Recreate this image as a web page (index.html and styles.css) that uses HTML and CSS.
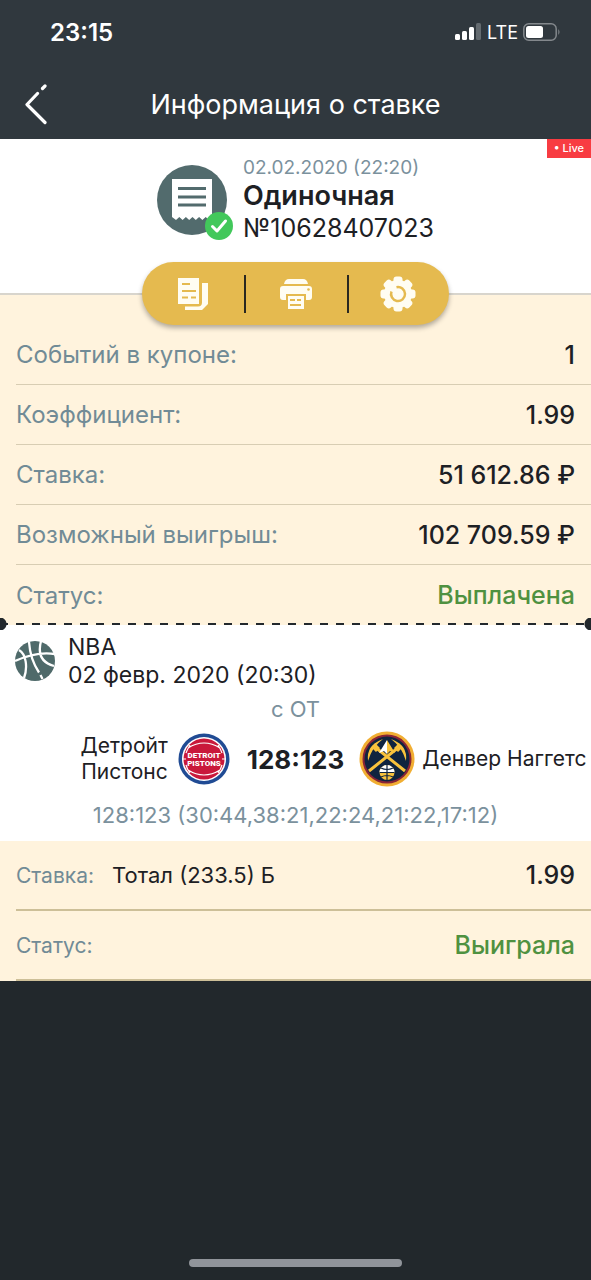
FILE: index.html
```html
<!DOCTYPE html>
<html lang="ru">
<head>
<meta charset="utf-8">
<meta name="viewport" content="width=device-width, initial-scale=1">
<title>Информация о ставке</title>
<link rel="stylesheet" href="styles.css">
</head>
<body>
<div class="screen">
  <header class="top">
    <div class="status">
      <span class="clock">23:15</span>
      <div class="status-icons">
        <svg width="27" height="18" viewBox="0 0 27 18" aria-hidden="true">
          <rect x="0" y="11" width="5" height="6" rx="1.5" fill="#fff"/>
          <rect x="7" y="8" width="5" height="9" rx="1.5" fill="#fff"/>
          <rect x="14" y="4" width="5" height="13" rx="1.5" fill="#fff"/>
          <rect x="21" y="0" width="5" height="17" rx="1.5" fill="#646b70"/>
        </svg>
        <span class="network">LTE</span>
        <svg width="38" height="18" viewBox="0 0 38 18" aria-hidden="true">
          <rect x=".8" y=".8" width="32.4" height="16.4" rx="5" fill="none" stroke="#83888c" stroke-width="1.5"/>
          <rect x="3" y="3" width="17" height="12" rx="2.5" fill="#fff"/>
          <path d="M35.3 6q2.400 3 0 6z" fill="#83888c"/>
        </svg>
      </div>
    </div>
    <nav class="nav">
      <button class="back" type="button" aria-label="Назад">
        <svg width="24" height="42" viewBox="0 0 24 42" fill="none" stroke="#fff" stroke-width="3.2" stroke-linecap="round" stroke-linejoin="round" aria-hidden="true">
          <path d="M13.500 9.500L3 20.500l18 18M18.500 4.500L21 2"/>
        </svg>
      </button>
      <h1 class="title">Информация о ставке</h1>
    </nav>
  </header>

  <section class="ticket">
    <span class="live">• Live</span>
    <svg class="ticket-icon" width="78" height="78" viewBox="0 0 78 78" aria-hidden="true">
      <circle cx="35" cy="36" r="35" fill="#526b6d"/>
      <path d="M15 15h40v38l-3 3-3.300-3-3.300 3-3.300-3-3.300 3-3.300-3-3.300 3-3.300-3-3.300 3-3.300-3-3.300 3L15 53z" fill="#fff"/>
      <path d="M21 24.500h28M21 33h28M21 41h28" stroke="#526b6d" stroke-width="3"/>
      <circle cx="62" cy="62" r="14" fill="#42c85b"/>
      <path d="M55.500 62.500l4.500 4.500 8.500-10" fill="none" stroke="#fff" stroke-width="3" stroke-linecap="round" stroke-linejoin="round"/>
    </svg>
    <div class="ticket-text">
      <time class="ticket-date">02.02.2020 (22:20)</time>
      <strong class="ticket-type">Одиночная</strong>
      <span class="ticket-number">№10628407023</span>
    </div>
  </section>

  <div class="actions">
    <button class="action" type="button" aria-label="Копировать купон">
      <svg width="32" height="34" viewBox="0 0 32 34" aria-hidden="true">
        <path d="M1 1h21v26H1z" fill="#fffdf2"/>
        <path d="M25 6h6v21l-6 6H8v-3.500h13q4 0 4-4z" fill="#fffdf2"/>
        <path d="M5 7h8M5 14h14M5 20.500h6M14 20.500h5" stroke="#e5ba4f" stroke-width="2"/>
      </svg>
    </button>
    <button class="action" type="button" aria-label="Печать">
      <svg width="34" height="34" viewBox="0 0 34 34" aria-hidden="true">
        <path d="M5 7q1-5 5-5h14q4 0 5 5z" fill="#fffdf2"/>
        <path d="M4 9h26q3 0 3 3v8q0 3-3 3h-3v-6H7v6H4q-3 0-3-3v-8q0-3 3-3z" fill="#fffdf2"/>
        <circle cx="29.500" cy="12.500" r="1.300" fill="#e5ba4f"/>
        <path d="M9 19h16v13H9z" fill="#fffdf2"/>
        <path d="M11 23h5M18 23h4M11 28h11" stroke="#e5ba4f" stroke-width="2"/>
      </svg>
    </button>
    <button class="action" type="button" aria-label="Настройки">
      <svg width="36" height="36" viewBox="0 0 36 36" aria-hidden="true">
        <g fill="#fffdf2">
          <circle cx="18" cy="18" r="14"/>
          <rect x="13.500" y=".5" width="9" height="35" rx="3"/>
          <rect x="13.500" y=".5" width="9" height="35" rx="3" transform="rotate(45 18 18)"/>
          <rect x="13.500" y=".5" width="9" height="35" rx="3" transform="rotate(90 18 18)"/>
          <rect x="13.500" y=".5" width="9" height="35" rx="3" transform="rotate(135 18 18)"/>
        </g>
        <path d="M16.500 11.200a7 7 0 1 1-5 4.300" fill="none" stroke="#e5ba4f" stroke-width="2.500"/>
        <path d="M12.500 13l5 5" stroke="#fffdf2" stroke-width="3"/>
        <circle cx="18" cy="18" r="3.500" fill="#fffdf2"/>
      </svg>
    </button>
  </div>

  <dl class="summary">
    <div class="row"><dt>Событий в купоне:</dt><dd>1</dd></div>
    <div class="row"><dt>Коэффициент:</dt><dd>1.99</dd></div>
    <div class="row"><dt>Ставка:</dt><dd>51 612.86 ₽</dd></div>
    <div class="row"><dt>Возможный выигрыш:</dt><dd>102 709.59 ₽</dd></div>
    <div class="row"><dt>Статус:</dt><dd class="won">Выплачена</dd></div>
  </dl>

  <section class="match">
    <div class="league">
      <svg width="40" height="40" viewBox="0 0 40 40" aria-hidden="true">
        <circle cx="20" cy="20" r="20" fill="#4f6a6a"/>
        <path d="M4 9C11 13 13 26 9 37M0 20C13 14 27 11 40 13M14 1C15 15 19 24 24 31.500M26 0C22 15 28 22 39 25M25.500 34l2 4" fill="none" stroke="#fff" stroke-width="2.300"/>
      </svg>
      <div class="league-text">
        <span>NBA</span>
        <time>02 февр. 2020 (20:30)</time>
      </div>
    </div>
    <p class="note">с ОТ</p>
    <div class="teams">
      <div class="team home">
        <span class="team-name">Детройт Пистонс</span>
        <svg width="52" height="52" viewBox="0 0 52 52" role="img" aria-label="Detroit Pistons">
          <circle cx="26" cy="26" r="25.500" fill="#204b94"/>
          <circle cx="26" cy="26" r="22" fill="#fff"/>
          <circle cx="26" cy="26" r="20.500" fill="#c9183b"/>
          <g fill="none" stroke="#fff" stroke-width="1.200">
            <path d="M10 15Q26 5 42 15M10 37Q26 47 42 37M12 12q-3 5-4 8M8 32q1 4 4 8M40 12q3 5 4 8M44 32q-1 4-4 8M5 26h3M44 26h3"/>
          </g>
          <text class="pistons" x="26" y="25" text-anchor="middle">DETROIT</text>
          <text class="pistons" x="26" y="33" text-anchor="middle">PISTONS</text>
        </svg>
      </div>
      <strong class="score">128:123</strong>
      <div class="team away">
        <svg width="56" height="56" viewBox="0 0 56 56" role="img" aria-label="Denver Nuggets">
          <circle cx="28" cy="28" r="27.500" fill="#f1ae32"/>
          <circle cx="28" cy="28" r="24.500" fill="#8a2437"/>
          <circle cx="28" cy="28" r="22.500" fill="#10243f"/>
          <path d="M10 40L40 16M46 40L16 16" stroke="#f9c23c" stroke-width="3"/>
          <path d="M9 30Q7 14 24 8Q13 16 9 30zM47 30Q49 14 32 8Q43 16 47 30zM12 16l4-4 5 5-4 4zM44 16l-4-4-5 5 4 4z" fill="#f9c23c"/>
          <path d="M28 9l-8 13 5-2 3 3z" fill="#fff"/>
          <path d="M28 9l8 13-5-2-3 3z" fill="#f9c23c"/>
          <circle cx="28" cy="41.500" r="8.500" fill="#10243f"/>
          <circle cx="28" cy="41.500" r="7.500" fill="#f9c23c"/>
          <path d="M20.500 41.500a7.500 7.500 0 0 1 15 0z" fill="#fff"/>
          <path d="M20.500 41.500h15M28 34v15M22 37q6 3 12 0M22 46q6-3 12 0" fill="none" stroke="#10243f" stroke-width="1.200"/>
        </svg>
        <span class="team-name">Денвер Наггетс</span>
      </div>
    </div>
    <p class="periods">128:123 (30:44,38:21,22:24,21:22,17:12)</p>
  </section>

  <dl class="bet">
    <div class="row"><dt>Ставка:</dt><dd class="pick">Тотал (233.5) Б</dd><dd>1.99</dd></div>
    <div class="row"><dt>Статус:</dt><dd class="won">Выиграла</dd></div>
  </dl>

  <footer class="footer"><span class="home-bar"></span></footer>
</div>
</body>
</html>
```
FILE: styles.css
```css
* {
  box-sizing: border-box;
}

body,
h1,
p,
dl,
dd {
  margin: 0;
}

body {
  background: #22282c;
  color: #1d2024;
  font-family: Inter, "Liberation Sans", sans-serif;
  font-size: 24px;
}

button {
  border: 0;
  padding: 0;
  background: none;
  cursor: pointer;
}

svg {
  display: block;
  flex: none;
}

.screen {
  display: flex;
  flex-direction: column;
  min-height: 100vh;
  overflow-x: hidden;
}

.top {
  background: #30383e;
  color: #fff;
}

.status {
  display: flex;
  align-items: center;
  justify-content: space-between;
  height: 70px;
  padding: 0 30px 6px 50px;
}

.clock {
  font-size: 24px;
  font-weight: 600;
}

.status-icons {
  display: flex;
  align-items: center;
  gap: 5px;
}

.network {
  font-size: 18px;
  font-weight: 400;
}

.nav {
  display: grid;
  grid-template-columns: 48px 1fr 48px;
  align-items: center;
  height: 69px;
}

.back {
  display: flex;
  padding-left: 24px;
}

.title {
  font-size: 27px;
  font-weight: 400;
  text-align: center;
  white-space: nowrap;
}

.ticket {
  position: relative;
  display: flex;
  justify-content: center;
  gap: 8px;
  height: 156px;
  padding-top: 17px;
  background: #fff;
  border-bottom: 2px solid #d8d5cd;
}

.ticket-icon {
  margin-top: 8px;
}

.ticket-text {
  display: flex;
  flex-direction: column;
}

.ticket-date {
  color: #7b919d;
  font-size: 19px;
  line-height: 24px;
}

.ticket-type {
  font-size: 27px;
  font-weight: 600;
  line-height: 32px;
}

.ticket-number {
  font-size: 25px;
  line-height: 32px;
}

.live {
  position: absolute;
  top: 0;
  right: 0;
  padding: 0 7px;
  background: #f83c42;
  color: #fff;
  font-size: 11px;
  font-weight: 500;
  line-height: 19px;
}

.actions {
  position: relative;
  display: grid;
  grid-template-columns: repeat(3, 1fr);
  align-self: center;
  align-items: center;
  width: 52%;
  height: 63px;
  margin-top: -33px;
  margin-bottom: -30px;
  border-radius: 32px;
  background: #e5ba4f;
  box-shadow: 0 3px 5px #0000004d;
}

.action {
  display: flex;
  align-items: center;
  justify-content: center;
  height: 38px;
}

.action + .action {
  padding-right: 2px;
  border-left: 2px solid #2a2820;
}

.summary {
  padding-top: 30px;
  background: #fff3dd;
}

.row {
  display: flex;
  align-items: center;
  justify-content: space-between;
  height: 60px;
  margin-left: 16px;
  padding-right: 16px;
  border-bottom: 1px solid #d8cdb3;
}

.row dt {
  color: #718b96;
}

.row dd {
  font-size: 25px;
  font-weight: 500;
}

.row .won {
  color: #4f9140;
}

.summary .row:last-child {
  border-bottom: 0;
}

.match {
  position: relative;
  padding: 8px 0 12px;
  background: #fff;
}

.match::before {
  content: "";
  position: absolute;
  top: -2px;
  right: 0;
  left: 0;
  height: 2px;
  background: repeating-linear-gradient(90deg, #22282c 0 8px, #fff3dd 8px 16px);
}

.match::after {
  content: "";
  position: absolute;
  top: -7px;
  right: 0;
  left: 0;
  height: 12px;
  background: radial-gradient(circle at 0 6px, #22282c 6px, transparent 7px), radial-gradient(circle at 100% 6px, #22282c 6px, transparent 7px);
}

.league {
  display: flex;
  align-items: center;
  gap: 13px;
  padding: 0 15px;
}

.league-text {
  display: flex;
  flex-direction: column;
  font-size: 23px;
  line-height: 28px;
}

.note,
.periods {
  color: #7b919d;
  font-size: 22px;
  line-height: 28px;
  text-align: center;
}

.note {
  margin-top: 6px;
}

.teams {
  display: grid;
  grid-template-columns: minmax(0, 1fr) auto minmax(0, 1fr);
  align-items: center;
  margin-top: 8px;
}

.team {
  display: flex;
  align-items: center;
}

.home {
  justify-content: flex-end;
  gap: 10px;
  padding-right: 17px;
  text-align: right;
}

.away {
  gap: 7px;
  padding-left: 15px;
  white-space: nowrap;
}

.team-name {
  font-size: 21px;
  line-height: 26px;
}

.pistons {
  fill: #fff;
  font-family: Roboto, "Liberation Sans", sans-serif;
  font-size: 8px;
  font-weight: 900;
}

.score {
  font-size: 26px;
  font-weight: 700;
}

.periods {
  margin-top: 14px;
}

.bet {
  background: #fff3dd;
}

.bet .row {
  height: 70px;
  border-bottom: 2px solid #cdbf98;
}

.bet dt {
  font-size: 21px;
}

.bet .pick {
  flex: 1;
  margin-left: 18px;
  font-size: 22px;
  font-weight: 400;
}

.footer {
  display: flex;
  flex: 1;
  align-items: flex-end;
  justify-content: center;
  padding-bottom: 13px;
}

.home-bar {
  width: 36%;
  height: 8px;
  border-radius: 4px;
  background: #90949a;
}
```
